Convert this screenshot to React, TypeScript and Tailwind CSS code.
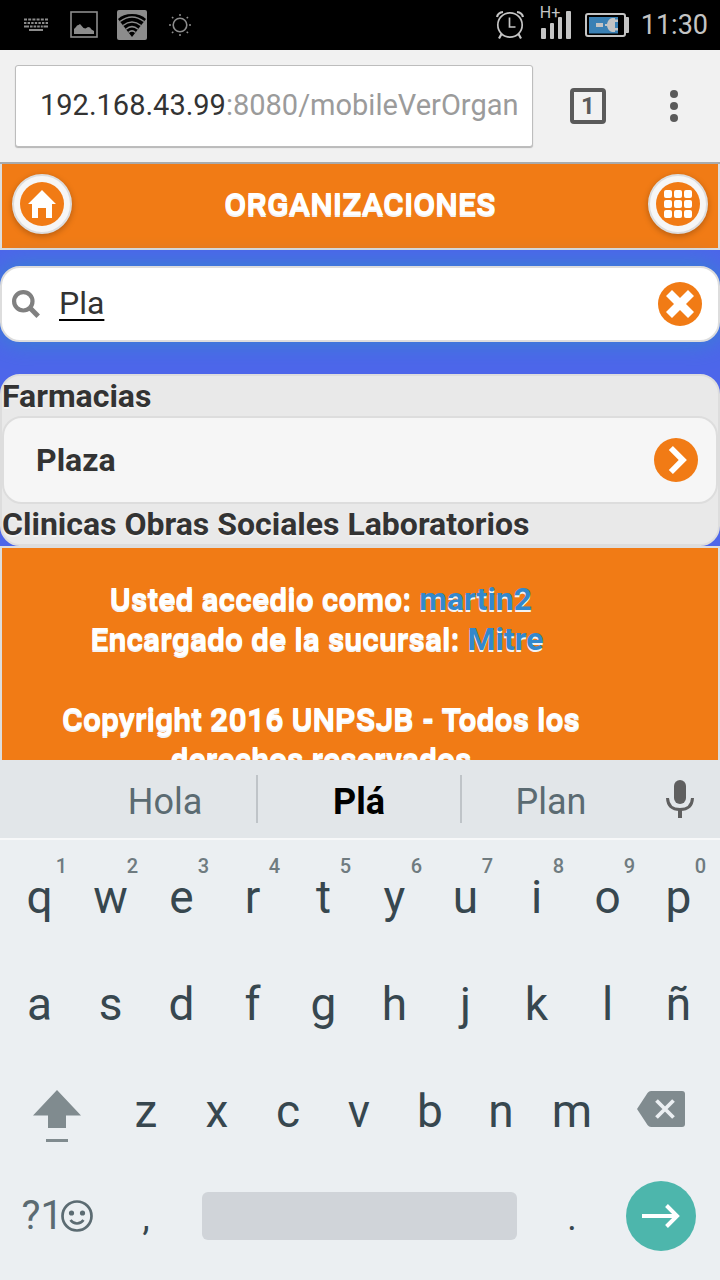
import type { ReactNode } from "react";

const topRow = ["q", "w", "e", "r", "t", "y", "u", "i", "o", "p"];
const hints = ["1", "2", "3", "4", "5", "6", "7", "8", "9", "0"];
const homeRow = ["a", "s", "d", "f", "g", "h", "j", "k", "l", "ñ"];
const bottomRow = ["z", "x", "c", "v", "b", "n", "m"];

function StatusBar() {
  return (
    <div className="flex h-[50px] shrink-0 items-center justify-between bg-black pr-3 pl-6 text-[#c4c4c4]">
      <div className="flex items-center text-[#8c8c8c]">
        <svg width="24" height="14" viewBox="0 0 24 14" fill="none" stroke="currentColor" strokeWidth="2">
          <path d="M0 1.5h24" strokeDasharray="3 1.2" />
          <path d="M0 5h24" strokeDasharray="2.4 1.2" />
          <path d="M0 8.5h5M6 8.5h2.6M9.6 8.5h2.6M13.2 8.5h2.6M16.8 8.5h2M19.5 8.5H24" />
          <path d="M5 12h14" />
        </svg>
        <svg className="ml-[22px]" width="28" height="28" viewBox="0 0 28 28">
          <rect x="1" y="1" width="26" height="25" fill="none" stroke="currentColor" strokeWidth="1.6" />
          <path d="M4 23v-5l2-2 1-1.500 1.500-.5L10 13l3.500 4 2 .5 2.500-1.500 2 .5 1.500 2L24 20v3z" fill="currentColor" />
        </svg>
        <svg className="ml-[19px]" width="30" height="30" viewBox="0 0 30 30">
          <rect width="30" height="30" rx="2" fill="currentColor" />
          <path d="M15 27L1 9Q6 4 15 4t14 5z" fill="#000" />
          <g fill="none" stroke="currentColor" strokeWidth="1.5">
            <path d="M3 11.500Q15 2.500 27 11.500" />
            <path d="M6 15.500Q15 8.500 24 15.500" />
            <path d="M9 19.200Q15 14 21 19.200" />
            <path d="M11.500 22.500Q15 19.300 18.500 22.500" />
          </g>
        </svg>
        <svg className="ml-[22px]" width="22" height="22" viewBox="0 0 22 22">
          <circle cx="11" cy="11" r="6.800" fill="none" stroke="currentColor" strokeWidth="1.600" />
          <path
            d="M11 0v2M11 20v2M0 11h2M20 11h2M3 3l1.300 1.300M17.700 17.700L19 19M3 19l1.300-1.300M17.700 4.300L19 3"
            stroke="currentColor"
            strokeWidth="1.500"
          />
        </svg>
      </div>
      <div className="flex items-center">
        <svg width="28" height="30" viewBox="0 0 28 30" fill="none" stroke="currentColor" strokeWidth="1.700">
          <circle cx="14" cy="15" r="12.200" />
          <path d="M13.500 7.500v9.500h6" />
          <path d="M1 7Q2 2.500 7 2M27 7q-1-4.500-6-5M5.500 24L3 28.500M22.500 24l2.500 4.500" strokeWidth="2.200" />
        </svg>
        <div className="relative mb-1 ml-4 h-8 w-8">
          <svg className="h-8 w-8" viewBox="0 0 32 32" fill="currentColor">
            <rect x="1" y="21" width="5" height="11" rx="1" />
            <rect x="10" y="16" width="4" height="16" rx="1" />
            <rect x="18" y="10" width="4" height="22" rx="1" />
            <rect x="26" y="4" width="5" height="28" rx="1" />
          </svg>
          <span className="absolute -top-1 left-0 text-[16px] leading-5">H+</span>
        </div>
        <svg className="ml-[13px]" width="44" height="24" viewBox="0 0 44 24">
          <rect x="1" y="1" width="39" height="22" rx="2" fill="none" stroke="currentColor" strokeWidth="2" />
          <rect x="4" y="4" width="29" height="16.500" fill="#3a80b4" />
          <rect x="40" y="4" width="4" height="16" rx="1" fill="currentColor" />
          <path
            d="M11 10h7v4h-7zM20 11h2q1-5 5-6h3v1.500h3v2.500h-3v6h3v2.500h-3V19h-3q-4-1-5-6h-2z"
            fill="currentColor"
          />
        </svg>
        <span className="ml-3 text-[27px] leading-8">11:30</span>
      </div>
    </div>
  );
}

function BrowserBar() {
  return (
    <div className="flex h-[114px] shrink-0 items-center border-b-2 border-[#a9abad] bg-[#f1f1f1] pr-[26px] pl-[15px]">
      <button
        type="button"
        aria-label="Dirección"
        className="h-[82px] min-w-0 flex-1 overflow-hidden rounded-[3px] border border-[#bdbdbd] bg-white pr-4 pl-6 text-left text-[29px] whitespace-nowrap text-[#9b9b9b] shadow-[0_1px_1px_#b5b5b5]"
      >
        <span className="text-[#333]">192.168.43.99</span>:8080/mobileVerOrgan
      </button>
      <button
        type="button"
        aria-label="Pestañas"
        className="ml-[37px] flex h-9 w-9 items-center justify-center rounded-[4px] border-4 border-[#5a5a5a] text-[24px] leading-7 font-bold text-[#5a5a5a]"
      >
        1
      </button>
      <button type="button" aria-label="Más opciones" className="ml-12 flex h-12 w-10 items-center justify-center">
        <svg width="8" height="32" viewBox="0 0 8 32" fill="#5a5a5a" overflow="visible">
          <circle cx="4" cy="4" r="4" />
          <circle cx="4" cy="16" r="4" />
          <circle cx="4" cy="28" r="4" />
        </svg>
      </button>
    </div>
  );
}

function Disc({ children }: { children: ReactNode }) {
  return (
    <span className="flex h-11 w-11 shrink-0 items-center justify-center rounded-full bg-[#f17b15]">
      <svg className="h-7 w-7" viewBox="0 0 14 14" fill="#fff">
        {children}
      </svg>
    </span>
  );
}

function RoundButton({ label, children }: { label: string; children: ReactNode }) {
  return (
    <button
      type="button"
      aria-label={label}
      className="flex h-[60px] w-[60px] items-center justify-center rounded-full border-2 border-[#ddd] bg-[#f6f6f6] shadow-[0_2px_6px_rgba(0,0,0,0.25)]"
    >
      {children}
    </button>
  );
}

function PageHeader() {
  return (
    <header className="flex h-[86px] items-center justify-between border-x-2 border-b-2 border-[#ddd] bg-[#f17b15] px-[10px] pb-1">
      <RoundButton label="Inicio">
        <Disc>
          <polygon points="7,0 0,7 2,7 2,14 5,14 5,9 9,9 9,14 12,14 12,7 14,7" />
        </Disc>
      </RoundButton>
      <h1 className="text-[32px] leading-10 font-bold text-white [text-shadow:0_2px_0_#f3f3f3]">ORGANIZACIONES</h1>
      <RoundButton label="Menú">
        <Disc>
          {[0, 5, 10].map((y) => [0, 5, 10].map((x) => <rect key={`${x}-${y}`} x={x} y={y} width="4" height="4" rx="1" />))}
        </Disc>
      </RoundButton>
    </header>
  );
}

function SearchBox() {
  return (
    <div className="mt-4 flex h-[76px] items-center rounded-[20px] border-2 border-[#ddd] bg-white pr-4 pl-[10px] shadow-[0_0_24px_#3388cc]">
      <svg className="h-7 w-7 shrink-0" viewBox="0 0 14 14" fill="none" stroke="#808080">
        <circle cx="5.650" cy="5.650" r="4.600" strokeWidth="2.100" />
        <path d="M8.900 8.900l4.200 4.200" strokeWidth="2.500" />
      </svg>
      <input
        type="text"
        aria-label="Buscar"
        defaultValue="Pla"
        className="ml-[19px] h-16 min-w-0 flex-1 bg-transparent pb-[2px] text-[32px] text-[#333] underline decoration-black decoration-2 underline-offset-[5px] outline-none"
      />
      <button type="button" aria-label="Borrar texto">
        <Disc>
          <polygon points="14,3 11,0 7,4 3,0 0,3 4,7 0,11 3,14 7,10 11,14 14,11 10,7" />
        </Disc>
      </button>
    </div>
  );
}

function Results() {
  return (
    <section className="mt-8 rounded-[20px] border-2 border-[#ddd] bg-[#e9e9e9] text-[32px] leading-10 font-bold text-[#333] [text-shadow:0_2px_0_#f3f3f3]">
      <h2>Farmacias</h2>
      <a
        href="#plaza"
        className="flex h-[88px] items-center justify-between rounded-[20px] border-2 border-[#ddd] bg-[#f6f6f6] pr-[18px] pl-8"
      >
        Plaza
        <Disc>
          <polygon points="3.404,2.051 5.455,0 12.455,7 5.455,14 3.404,11.949 8.354,7" />
        </Disc>
      </a>
      <h2>Clinicas Obras Sociales Laboratorios</h2>
    </section>
  );
}

function PageFooter() {
  return (
    <footer className="border-2 border-[#ddd] bg-[#f17b15] pt-[31px] pb-8 pr-[78px] text-center text-[32px] leading-10 font-bold text-white [text-shadow:0_2px_0_#f3f3f3]">
      <p>
        Usted accedio como:{" "}
        <a href="#usuario" className="text-[#3388cc]">
          martin2
        </a>
      </p>
      <p>
        Encargado de la sucursal:{" "}
        <a href="#sucursal" className="text-[#3388cc]">
          Mitre
        </a>
        {"\u00a0"}
      </p>
      <p className="mt-10">Copyright 2016 UNPSJB - Todos los derechos reservados</p>
    </footer>
  );
}

function Suggestions() {
  return (
    <div className="flex h-[78px] items-center bg-[#e2e6e9] pl-[74px] text-[36px] text-[#5b6b72]">
      <div className="grid h-12 flex-1 grid-cols-[182fr_206fr_178fr] items-center">
        <button type="button" className="h-12 pt-[6px] leading-10">
          Hola
        </button>
        <button type="button" className="h-12 border-x-2 border-[#bfc4c8] pt-[6px] leading-10 font-bold text-black">
          Plá
        </button>
        <button type="button" className="h-12 pt-[6px] leading-10">
          Plan
        </button>
      </div>
      <button type="button" aria-label="Dictar" className="flex w-20 justify-center">
        <svg width="28" height="38" viewBox="0 0 28 38" fill="none" stroke="#5f5f5f">
          <path d="M14 6v12" strokeWidth="12" strokeLinecap="round" />
          <path d="M1.500 18Q2 29.500 14 29.500T26.500 18" strokeWidth="3" />
          <path d="M14 29v9" strokeWidth="4" />
        </svg>
      </button>
    </div>
  );
}

function Key({ label, hint }: { label: string; hint?: string }) {
  return (
    <button type="button" className="relative col-span-2 h-full pt-1 text-[46px] leading-[56px] text-[#37474f]">
      {label}
      {hint && <span className="absolute top-[15px] right-[8px] text-[20px] leading-5 font-medium text-[#6f7b80]">{hint}</span>}
    </button>
  );
}

function PunctuationKey({ label }: { label: string }) {
  return (
    <button type="button" className="col-span-2 h-full pt-1 text-[36px] leading-[56px] text-[#37474f]">
      {label}
    </button>
  );
}

function Keyboard() {
  return (
    <div className="shrink-0 bg-[#ebeff2]">
      <Suggestions />
      <div className="border-t-2 border-[#f7f8f9] pt-px pr-[6px] pb-[11px] pl-1">
        <div className="grid auto-rows-[107px] grid-cols-20 items-center">
          {topRow.map((k, i) => (
            <Key key={k} label={k} hint={hints[i]} />
          ))}
          {homeRow.map((k) => (
            <Key key={k} label={k} />
          ))}
          <button type="button" aria-label="Mayúsculas" className="col-span-3 flex justify-center pt-[14px]">
            <svg width="48" height="52" viewBox="0 0 48 52" fill="#808b8f">
              <path d="M24 0l24 25.500H33V38H15V25.500H0z" />
              <path d="M13 49h22v3H13z" />
            </svg>
          </button>
          {bottomRow.map((k) => (
            <Key key={k} label={k} />
          ))}
          <button type="button" aria-label="Borrar" className="col-span-3 flex justify-center">
            <svg width="48" height="36" viewBox="0 0 48 36">
              <path d="M14 0h31q3 0 3 3v30q0 3-3 3H14q-2 0-3.500-2L0 18 10.500 2Q12 0 14 0z" fill="#808b8f" />
              <path d="M19.500 9.500l17 17m0-17l-17 17" stroke="#ebeff2" strokeWidth="3.800" />
            </svg>
          </button>
          <button
            type="button"
            aria-label="Símbolos y emojis"
            className="col-span-3 flex items-center justify-center text-[40px] leading-[56px] text-[#5b6b72]"
          >
            ?1
            <svg className="-ml-[2px]" width="32" height="32" viewBox="0 0 32 32" fill="none" stroke="currentColor">
              <circle cx="16" cy="16" r="14.500" strokeWidth="2.700" />
              <circle cx="10.500" cy="13" r="2.600" fill="currentColor" stroke="none" />
              <circle cx="21.500" cy="13" r="2.600" fill="currentColor" stroke="none" />
              <path d="M9.500 20Q12 23.500 16 23.500t6.500-3.500" strokeWidth="2.600" />
            </svg>
          </button>
          <PunctuationKey label="," />
          <button type="button" aria-label="Espacio" className="col-span-10 mx-5 h-12 rounded-[6px] bg-[#d0d4d9]" />
          <PunctuationKey label="." />
          <button type="button" aria-label="Ir" className="col-span-3 flex justify-center">
            <span className="flex h-[70px] w-[70px] items-center justify-center rounded-full bg-[#4db6ac]">
              <svg width="38" height="24" viewBox="0 0 38 24" fill="none" stroke="#fff" strokeWidth="4">
                <path d="M0 12h35M24.500 1.500L35 12 24.500 22.500" />
              </svg>
            </span>
          </button>
        </div>
      </div>
    </div>
  );
}

export default function App() {
  return (
    <div className="flex h-screen flex-col overflow-hidden font-[Roboto,sans-serif]">
      <StatusBar />
      <BrowserBar />
      <main className="min-h-0 flex-1 overflow-hidden bg-[#4d66ea]">
        <PageHeader />
        <SearchBox />
        <Results />
        <PageFooter />
      </main>
      <Keyboard />
    </div>
  );
}
